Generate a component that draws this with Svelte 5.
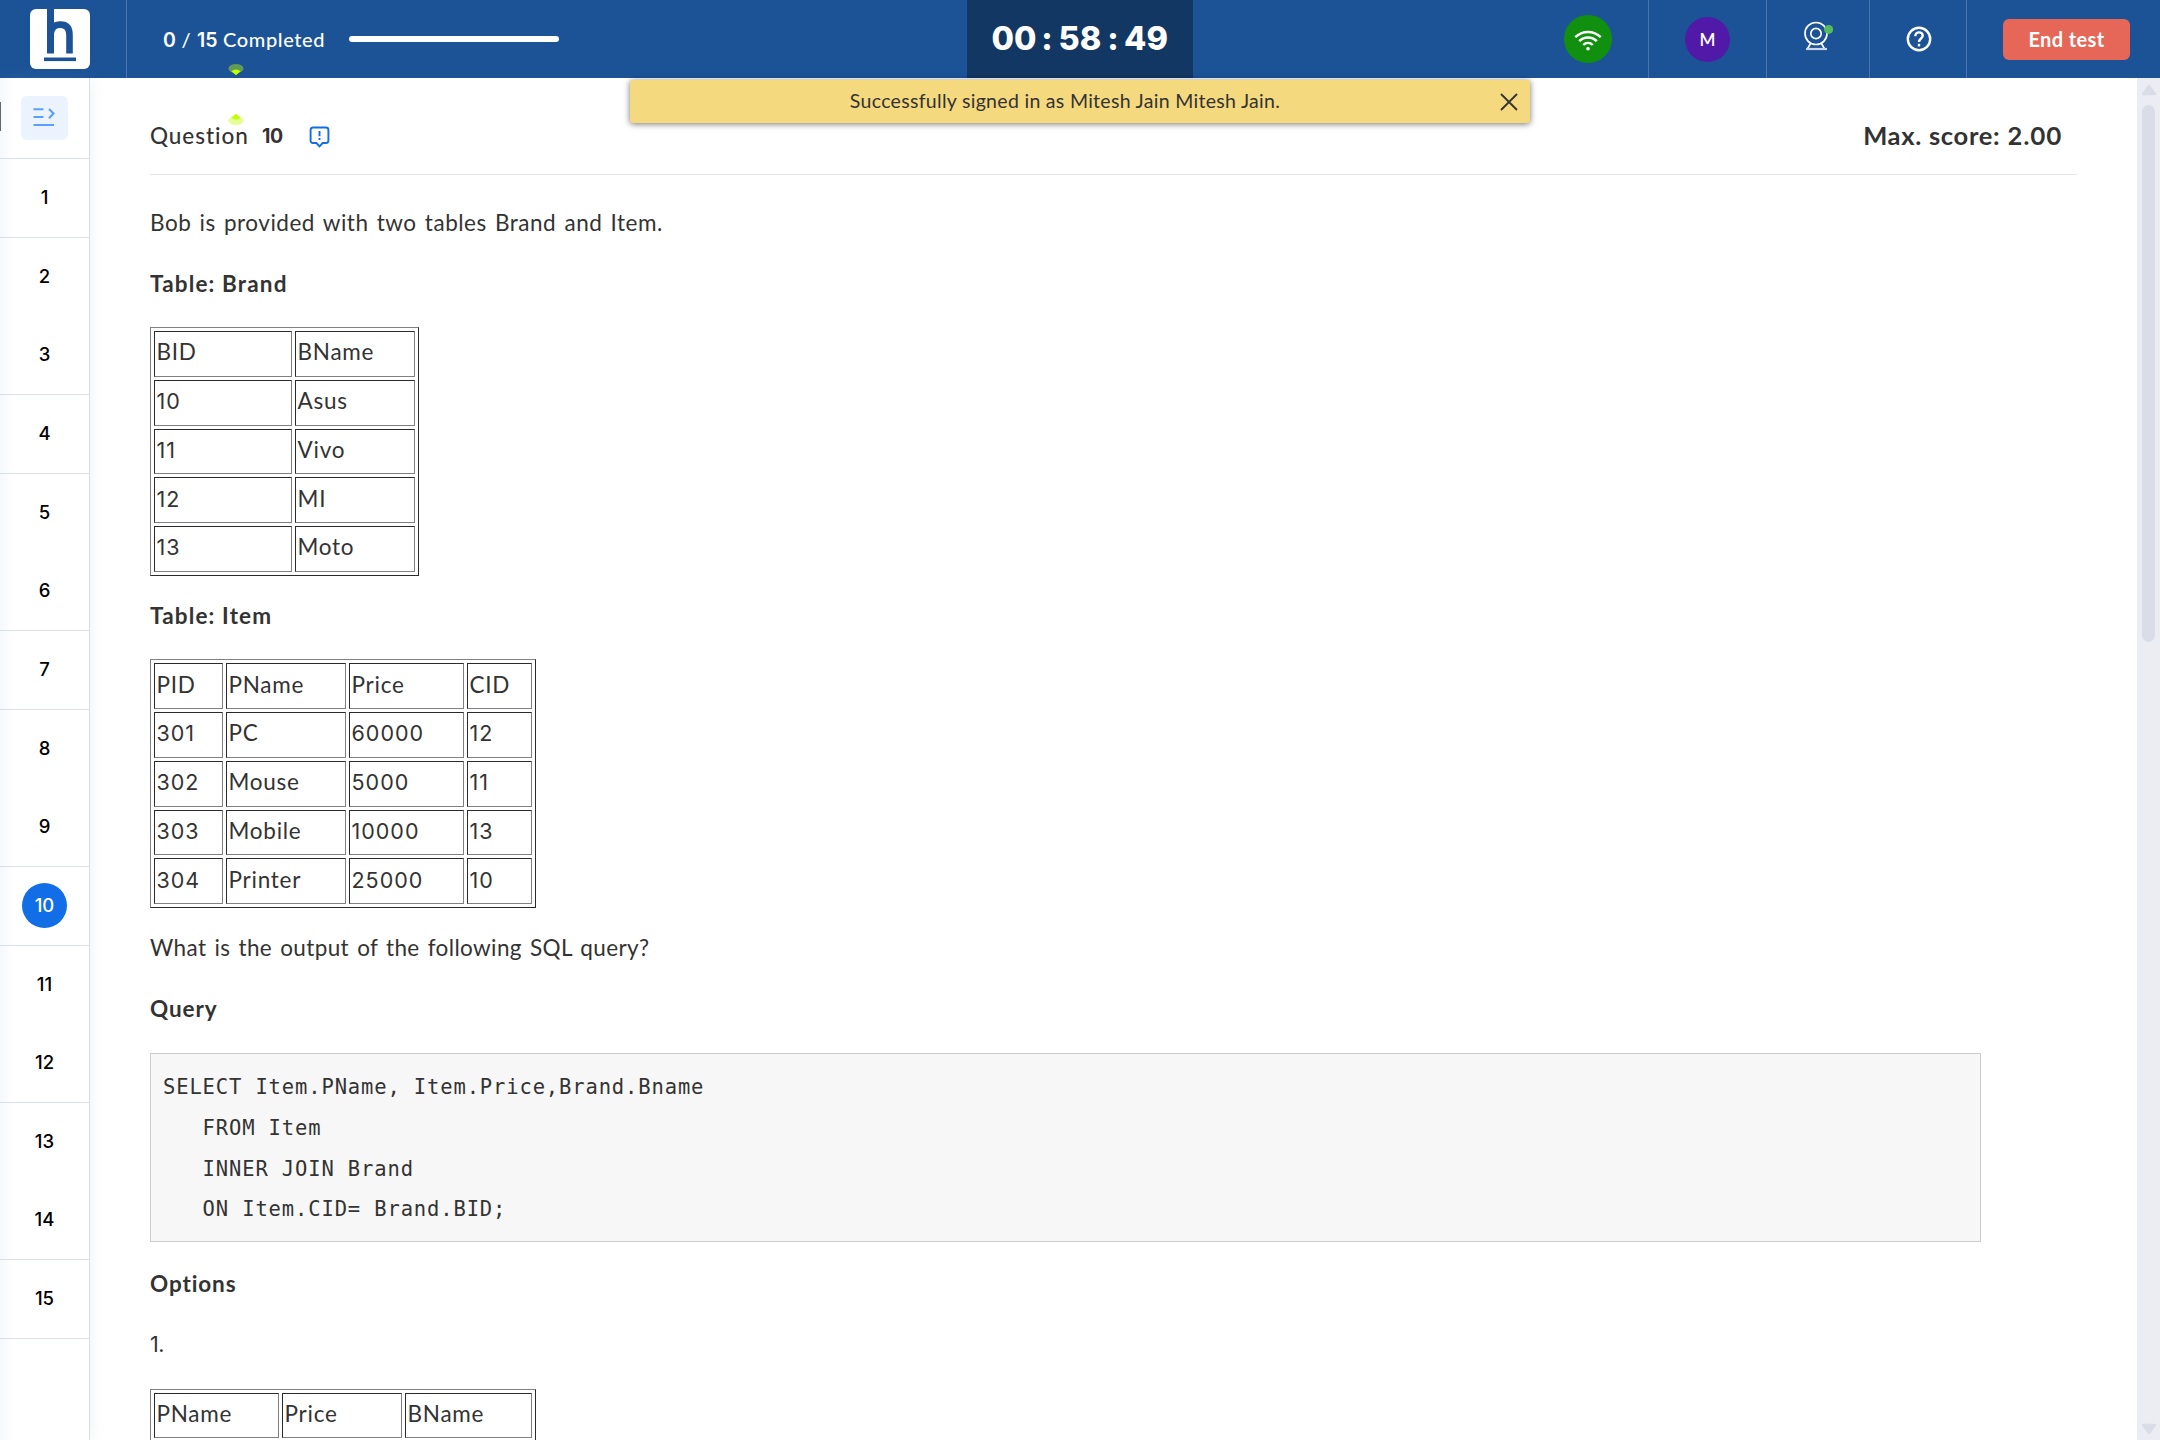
<script>
  const groups = [[1], [2, 3], [4], [5, 6], [7], [8, 9], [10], [11, 12], [13, 14], [15]];
  const current = 10;

  const brand = {
    cols: [138, 120],
    rows: [['BID', 'BName'], ['10', 'Asus'], ['11', 'Vivo'], ['12', 'MI'], ['13', 'Moto']]
  };
  const item = {
    cols: [69, 120, 115, 65],
    rows: [
      ['PID', 'PName', 'Price', 'CID'],
      ['301', 'PC', '60000', '12'],
      ['302', 'Mouse', '5000', '11'],
      ['303', 'Mobile', '10000', '13'],
      ['304', 'Printer', '25000', '10']
    ]
  };
  const option = {
    cols: [125, 120, 127],
    rows: [['PName', 'Price', 'BName']]
  };
  const query = `SELECT Item.PName, Item.Price,Brand.Bname
   FROM Item
   INNER JOIN Brand
   ON Item.CID= Brand.BID;`;
</script>

{#snippet grid(data)}
  <table>
    <colgroup>
      {#each data.cols as w}<col style="width: {w}px" />{/each}
    </colgroup>
    <tbody>
      {#each data.rows as row}
        <tr>{#each row as cell}<td class:digits={/^\d+$/.test(cell)}>{cell}</td>{/each}</tr>
      {/each}
    </tbody>
  </table>
{/snippet}

<div class="page">
  <header>
    <div class="brand">
      <svg width="60" height="60" viewBox="0 0 60 60">
        <rect width="60" height="60" rx="6" fill="#fff" />
        <g fill="none" stroke="#1c5397">
          <path d="M20.5 0V44.5" stroke-width="7" />
          <path d="M20.5 25C21.5 18 25 15.6 30.5 15.6C37 15.6 39.5 19.5 39.5 26V44.5" stroke-width="6.6" />
          <path d="M14 50.3H46" stroke-width="3.6" />
        </g>
      </svg>
    </div>
    <div class="progress">
      <span class="done"><b>0</b> / <b>15</b> Completed</span>
      <span class="bar"></span>
    </div>
    <div class="timer"><span>00</span><i>:</i><span>58</span><i>:</i><span>49</span></div>
    <div class="tools">
      <div class="cell wifi">
        <span class="disc green">
          <svg width="28" height="22" viewBox="0 0 28 22" fill="none" stroke="#fff" stroke-width="2.4">
            <path d="M1.2 7.2C8.5 .2 19.5 .2 26.8 7.2" />
            <path d="M5.2 11.2C10.2 6.2 17.8 6.2 22.8 11.2" />
            <path d="M9.2 15C12 12.2 16 12.2 18.8 15" />
            <circle cx="14" cy="18.7" r="1.8" fill="#fff" stroke="none" />
          </svg>
        </span>
      </div>
      <div class="cell user"><span class="disc purple">M</span></div>
      <div class="cell cam">
        <svg width="30" height="30" viewBox="0 0 30 30" fill="none" stroke="#fff" stroke-width="1.7">
          <circle cx="13" cy="12.5" r="11" />
          <circle cx="13" cy="12.5" r="5.2" />
          <path d="M7.5 22.5L4.6 27.6M18.5 22.5L21.4 27.6" />
          <path d="M3 28H24" stroke="#c9d6e8" stroke-width="2.2" />
          <circle cx="25.6" cy="8.4" r="4.5" fill="#55bb5c" stroke="none" />
        </svg>
      </div>
      <div class="cell help">
        <svg width="26" height="26" viewBox="0 0 26 26" fill="none" stroke="#fff" stroke-width="2.4">
          <circle cx="13" cy="13" r="11.2" />
          <path d="M9.3 10.2C9.3 7.6 11 6.4 13 6.4S16.7 7.6 16.7 9.8C16.7 12.4 13 12.7 13 15.9" />
          <path d="M13 17.8V20.4" />
        </svg>
      </div>
      <button>End test</button>
    </div>
  </header>

  <div class="body">
    <nav>
      <div class="toggle">
        <span>
          <svg width="22" height="20" viewBox="0 0 22 20" fill="none" stroke="#5a9fff" stroke-width="2.1">
            <path d="M.5 2.3H10.5M.5 10H10.5M.5 18H21" />
            <path d="M16 2L20.5 6.6L16 11.2" />
          </svg>
        </span>
      </div>
      {#each groups as group}
        <div class="group">
          {#each group as n}
            <div class="num" class:active={n === current}><span>{n}</span></div>
          {/each}
        </div>
      {/each}
    </nav>

    <main>
      <div class="title">
        <span class="q">Question</span>
        <b>10</b>
        <svg width="21" height="23" viewBox="0 0 21 23" fill="none" stroke="#116ee6" stroke-width="1.9">
          <path d="M4 1.5H17Q19.4 1.5 19.4 4V14.5Q19.4 17 17 17H13.6L10.5 20.4L7.4 17H4Q1.6 17 1.6 14.5V4Q1.6 1.5 4 1.5Z" />
          <path d="M10.5 5V10.3M10.5 12V14" />
        </svg>
        <span class="score">Max. score: <em>2.00</em></span>
      </div>

      <p class="intro">Bob is provided with two tables Brand and Item.</p>
      <p class="head">Table: Brand</p>
      {@render grid(brand)}
      <p class="head">Table: Item</p>
      {@render grid(item)}
      <p class="ask">What is the output of the following SQL query?</p>
      <p class="head tight">Query</p>
      <pre>{query}</pre>
      <p class="head tight">Options</p>
      <p class="one">1.</p>
      {@render grid(option)}
    </main>

    <div class="scroll">
      <svg width="16" height="12" viewBox="0 0 16 12"><path d="M8 2L14 10H2Z" /></svg>
      <span></span>
      <svg class="down" width="16" height="12" viewBox="0 0 16 12"><path d="M2 2H14L8 10Z" /></svg>
    </div>
  </div>

  <div class="toast">
    <span>Successfully signed in as Mitesh Jain Mitesh Jain.</span>
    <svg width="18" height="18" viewBox="0 0 18 18" stroke="#333" stroke-width="1.8"><path d="M1 1L17 17M17 1L1 17" /></svg>
  </div>
  <i class="edge"></i>
  <svg class="spark" width="16" height="62" viewBox="0 0 16 62">
    <ellipse cx="8" cy="4.6" rx="7.5" ry="4.6" fill="#c0ff00" opacity=".42" />
    <path d="M3.4 7.2Q8 3.6 12.6 7.2L8 11.2Z" fill="#c0ff00" />
    <ellipse cx="8" cy="56.5" rx="7.5" ry="4.6" fill="#c0ff00" opacity=".42" />
    <path d="M3.4 53.8Q8 57.4 12.6 53.8L8 49.8Z" fill="#c0ff00" />
  </svg>
</div>

<style>
  :global(body) {
    margin: 0;
    overflow: hidden;
  }
  .page {
    position: relative;
    width: 2160px;
    height: 1440px;
    overflow: hidden;
    display: flex;
    flex-direction: column;
    background: #fff;
    color: #333;
    font-family: Lato, 'Open Sans', sans-serif;
    font-size: 22.5px;
  }
  svg {
    display: block;
    flex: none;
  }
  header {
    height: 78px;
    flex: none;
    display: grid;
    grid-template-columns: 126px 841px 226px 1fr;
    background: #1c5397;
    color: #fff;
  }
  .brand {
    padding: 9px 0 0 30px;
    border-right: 1px solid #4975ac;
    width: 96px;
  }
  .progress {
    display: flex;
    align-items: center;
    padding-left: 37px;
    font-size: 20px;
    font-weight: 500;
  }
  .done {
    width: 186px;
    white-space: nowrap;
    letter-spacing: 0.6px;
  }
  .done b {
    font-family: Inter, sans-serif;
    font-size: 19.5px;
    font-weight: 600;
    letter-spacing: 0;
  }
  .bar {
    width: 210px;
    height: 6px;
    border-radius: 3px;
    background: #fff;
  }
  .timer {
    display: flex;
    justify-content: center;
    align-items: center;
    padding-bottom: 2px;
    height: 76px;
    background: #123762;
    font-family: Inter, sans-serif;
    font-size: 32.5px;
    font-weight: 800;
  }
  .timer span {
    width: 45px;
    text-align: center;
  }
  .timer i {
    width: 21px;
    text-align: center;
    font-style: normal;
  }
  .tools {
    display: flex;
    align-items: center;
  }
  .cell {
    height: 78px;
    box-sizing: border-box;
    display: flex;
    align-items: center;
    justify-content: center;
    border-right: 1px solid #4975ac;
  }
  .wifi {
    width: 456px;
    padding-left: 335px;
  }
  .user {
    width: 118px;
  }
  .cam {
    width: 103px;
    padding: 0 1px 6px 0;
  }
  .help {
    width: 97px;
    padding-left: 1px;
  }
  .disc {
    display: flex;
    align-items: center;
    justify-content: center;
    border-radius: 50%;
  }
  .green {
    width: 48px;
    height: 48px;
    background: #11900f;
  }
  .green svg {
    margin-top: 4px;
  }
  .purple {
    width: 45px;
    height: 45px;
    background: #5019a8;
    font-size: 17px;
    font-weight: 600;
  }
  button {
    margin-left: 36px;
    width: 127px;
    height: 41px;
    padding: 0 0 1px;
    border: 0;
    border-radius: 6px;
    background: #e66658;
    color: #fff;
    font: 700 20px Lato, sans-serif;
    letter-spacing: 0.4px;
  }
  .body {
    flex: 1;
    min-height: 0;
    display: flex;
  }
  nav {
    width: 89px;
    flex: none;
    border-right: 1px solid #d9dee7;
    background: linear-gradient(90deg, #f6f8fb, #fff 14px);
    box-shadow: 0 0 14px rgba(120, 150, 200, 0.14);
    color: #000;
    font-family: Inter, sans-serif;
    font-size: 18.5px;
    font-weight: 450;
  }
  .toggle {
    height: 80px;
    border-bottom: 1px solid #d9dee7;
    display: flex;
    justify-content: center;
  }
  .toggle span {
    margin-top: 18px;
    width: 47px;
    height: 44px;
    border-radius: 6px;
    background: #ebf3ff;
    display: flex;
    align-items: center;
    justify-content: center;
  }
  .toggle svg {
    margin: 0 2px 3px 0;
  }
  .group {
    border-bottom: 1px solid #d9dee7;
  }
  .num {
    height: 78px;
    box-sizing: border-box;
    padding-bottom: 1px;
    display: flex;
    align-items: center;
    justify-content: center;
  }
  .num span {
    width: 45px;
    height: 45px;
    line-height: 44px;
    border-radius: 50%;
    text-align: center;
  }
  .active span {
    background: #116ee6;
    color: #fff;
    font-weight: 500;
  }
  main {
    flex: 1;
    padding: 0 60px;
    overflow: hidden;
  }
  .title {
    box-sizing: border-box;
    height: 97px;
    border-bottom: 1px solid #e5e6e8;
    display: flex;
    align-items: center;
    padding-top: 19px;
  }
  .title svg {
    margin-top: 4px;
  }
  .q {
    width: 112px;
    font-weight: 500;
    letter-spacing: 0.95px;
  }
  .title b {
    width: 47px;
    font-family: Inter, sans-serif;
    font-size: 19.5px;
    font-weight: 700;
    letter-spacing: -0.5px;
  }
  .score {
    margin-left: auto;
    padding: 0 15px 1px 0;
    font-size: 25.5px;
    font-weight: 700;
    letter-spacing: 0.7px;
  }
  .score em {
    font: 600 24.5px Inter, sans-serif;
    letter-spacing: 0;
  }
  p {
    box-sizing: border-box;
    margin: 20px 0;
    height: 41px;
    line-height: 39px;
    letter-spacing: 0.5px;
    white-space: nowrap;
  }
  .intro {
    margin-top: 27.5px;
    letter-spacing: 0.51px;
    word-spacing: 2px;
  }
  .head {
    font-weight: 700;
    letter-spacing: 1.15px;
  }
  .tight {
    letter-spacing: 0.9px;
  }
  .ask {
    letter-spacing: 0.37px;
    word-spacing: 2px;
  }
  table {
    table-layout: fixed;
    width: min-content;
    margin: 22.5px 0 19.75px;
    border: 1px solid;
    border-color: #808080 #2b2b2b #2b2b2b #808080;
    border-collapse: separate;
    border-spacing: 3px;
  }
  td {
    box-sizing: border-box;
    height: 45.75px;
    padding: 0 0 3px 1.5px;
    line-height: 40px;
    border: 1px solid;
    border-color: #2b2b2b #808080 #808080 #2b2b2b;
    white-space: nowrap;
    letter-spacing: 0.75px;
  }
  .digits {
    font-family: Inter, sans-serif;
    font-size: 21.5px;
    letter-spacing: 1px;
  }
  pre {
    box-sizing: border-box;
    width: 1831px;
    height: 189px;
    margin: 23px 0 22px;
    padding: 13px 12px 11px;
    border: 1px solid #ccc;
    background: #f7f7f7;
    font-family: 'DejaVu Sans Mono', monospace;
    font-size: 20.5px;
    letter-spacing: 0.86px;
    line-height: 40.75px;
  }
  .one {
    font-family: Inter, sans-serif;
    font-size: 21.5px;
    letter-spacing: -0.5px;
  }
  .scroll {
    width: 23px;
    background: #ebedf2;
    display: flex;
    flex-direction: column;
    align-items: center;
    padding: 6px 0 5px;
  }
  .scroll path {
    fill: #d8dde7;
    stroke: #d8dde7;
    stroke-width: 2.4;
    stroke-linejoin: round;
  }
  .scroll span {
    margin-top: 9px;
    width: 13px;
    height: 537px;
    border-radius: 7px;
    background: #d8dde7;
  }
  .down {
    margin-top: auto;
  }
  .toast {
    position: absolute;
    left: 630px;
    top: 80px;
    width: 900px;
    height: 43px;
    box-sizing: border-box;
    padding: 0 12px 0 0;
    display: flex;
    align-items: center;
    border-radius: 3px;
    background: #f5d97f;
    box-shadow: 0 1px 6px rgba(0, 0, 0, 0.55);
    font-size: 19.5px;
  }
  .toast span {
    flex: 1;
    padding-bottom: 2px;
    text-align: center;
    letter-spacing: 0.3px;
  }
  .edge {
    position: absolute;
    left: 0;
    top: 102px;
    width: 1px;
    height: 29px;
    background: #666;
  }
  .spark {
    position: absolute;
    left: 227.5px;
    top: 64px;
  }
</style>
